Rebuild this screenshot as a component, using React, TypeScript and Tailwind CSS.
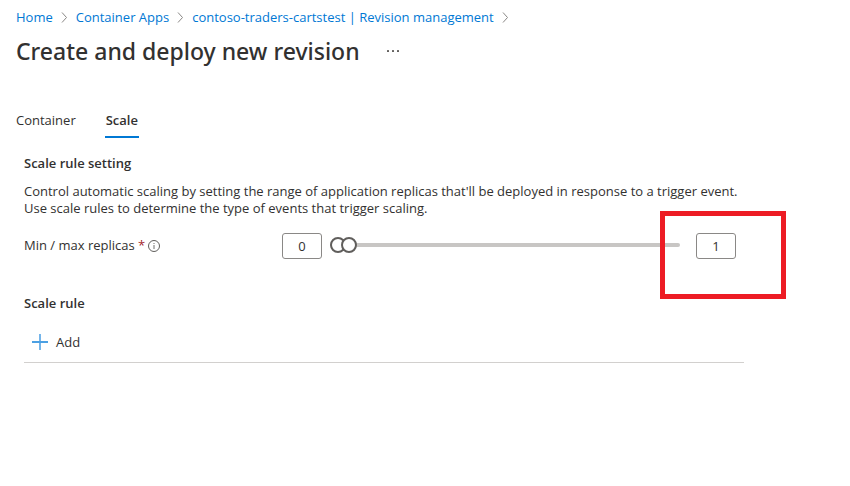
import { useState } from "react";

const MAX_REPLICAS = 30;

const numberBox =
  "h-[26px] w-10 shrink-0 rounded-[3px] border border-[#8a8886] bg-white text-center text-[13px] leading-5 text-[#323130] outline-none";

const rangeInput =
  "pointer-events-none col-start-1 row-start-1 m-0 h-4 w-full appearance-none bg-transparent outline-none [&::-webkit-slider-thumb]:pointer-events-auto [&::-webkit-slider-thumb]:box-border [&::-webkit-slider-thumb]:h-4 [&::-webkit-slider-thumb]:w-4 [&::-webkit-slider-thumb]:appearance-none [&::-webkit-slider-thumb]:rounded-full [&::-webkit-slider-thumb]:border-2 [&::-webkit-slider-thumb]:border-solid [&::-webkit-slider-thumb]:border-[#605e5c] [&::-webkit-slider-thumb]:bg-white";

const crumbs = [
  "Home",
  "Container Apps",
  "contoso-traders-cartstest | Revision management",
];

function Chevron() {
  return (
    <svg width="7" height="12" viewBox="0 0 7 12" fill="none" stroke="#8a8886" aria-hidden="true">
      <path d="M1 1.500 5.500 6.500 1 11.500" />
    </svg>
  );
}

function InfoIcon() {
  return (
    <svg width="12" height="12" viewBox="0 0 12 12" fill="none" stroke="#605e5c" aria-hidden="true">
      <circle cx="6" cy="6" r="5.500" />
      <path d="M6 5v4M6 3v1" strokeWidth="0.900" />
    </svg>
  );
}

function PlusIcon() {
  return (
    <svg width="16" height="16" viewBox="0 0 16 16" fill="none" aria-hidden="true">
      <path d="M8 0v16" stroke="#74b5ea" strokeWidth="2" />
      <path d="M0 8h16" stroke="#4ba0e3" strokeWidth="2" />
    </svg>
  );
}

export default function App() {
  const [min, setMin] = useState(0);
  const [max, setMax] = useState(1);

  const clamp = (text: string) => Math.max(0, Math.min(MAX_REPLICAS, Number(text) || 0));

  return (
    <div className="min-h-screen bg-white px-4 pt-[7px] font-['Open_Sans','Noto_Sans',sans-serif] text-[13px] text-[#323130]">
      <nav aria-label="Breadcrumb">
        <ol className="flex items-center gap-2 leading-5 text-[#0078d4]">
          {crumbs.map((crumb) => (
            <li key={crumb} className="flex items-center gap-2">
              <a href="#" className="whitespace-nowrap">{crumb}</a>
              <Chevron />
            </li>
          ))}
        </ol>
      </nav>

      <header className="mt-2 flex items-center gap-[26px]">
        <h1 className="font-['Noto_Sans','Open_Sans',sans-serif] text-[23px] leading-8 font-medium">Create and deploy new revision</h1>
        <button type="button" aria-label="More actions" className="flex h-5 items-center">
          <svg width="14" height="4" viewBox="0 0 14 4" fill="#605e5c" aria-hidden="true">
            <rect x="1" y="1" width="2" height="2" rx="0.500" />
            <rect x="6" y="1" width="2" height="2" rx="0.500" />
            <rect x="11" y="1" width="2" height="2" rx="0.500" />
          </svg>
        </button>
      </header>

      <div role="tablist" className="mt-[39px] flex gap-[29px]">
        <button type="button" role="tab" aria-selected="false" className="h-8 border-b-2 border-transparent">
          Container
        </button>
        <button type="button" role="tab" aria-selected="true" className="h-8 border-b-2 border-[#0078d4] px-px font-semibold">
          Scale
        </button>
      </div>

      <main className="ml-2 max-w-[720px] pt-[15px]">
        <h2 className="leading-5 font-semibold">Scale rule setting</h2>
        <p className="mt-[10px] leading-[17px]">
          Control automatic scaling by setting the range of application replicas that'll be deployed in response to a trigger event.
          <br />
          Use scale rules to determine the type of events that trigger scaling.
        </p>

        <div className="mt-4 mr-2 flex items-center">
          <div className="flex w-[258px] shrink-0 items-center gap-[3px]">
            <label htmlFor="min-replicas">
              Min / max replicas <span className="text-[#a4262c]">*</span>
            </label>
            <InfoIcon />
          </div>
          <input
            id="min-replicas"
            type="text"
            inputMode="numeric"
            className={numberBox}
            value={min}
            onChange={(e) => setMin(Math.min(clamp(e.target.value), max))}
          />
          <div className="mr-4 ml-2 grid min-w-0 flex-1 items-center pb-0.5">
            <div className="col-start-1 row-start-1 h-1 rounded-full bg-[#c8c6c4]" />
            <input
              type="range"
              aria-label="Minimum replicas"
              min={0}
              max={MAX_REPLICAS}
              value={min}
              onChange={(e) => setMin(Math.min(Number(e.target.value), max))}
              className={rangeInput}
            />
            <input
              type="range"
              aria-label="Maximum replicas"
              min={0}
              max={MAX_REPLICAS}
              value={max}
              onChange={(e) => setMax(Math.max(Number(e.target.value), min))}
              className={rangeInput}
            />
          </div>
          <div className="relative flex">
            <input
              type="text"
              inputMode="numeric"
              aria-label="Max replicas"
              className={numberBox}
              value={max}
              onChange={(e) => setMax(Math.max(clamp(e.target.value), min))}
            />
            <div className="pointer-events-none absolute -top-[22px] -left-9 h-[88px] w-[126px] border-5 border-[#ed1c24]" />
          </div>
        </div>

        <h2 className="mt-[34px] leading-5 font-semibold">Scale rule</h2>
        <div className="mt-[9px] border-b border-[#d2d0ce]">
          <button type="button" className="flex h-10 items-center gap-2 px-2">
            <PlusIcon />
            <span className="pt-0.5">Add</span>
          </button>
        </div>
      </main>
    </div>
  );
}
